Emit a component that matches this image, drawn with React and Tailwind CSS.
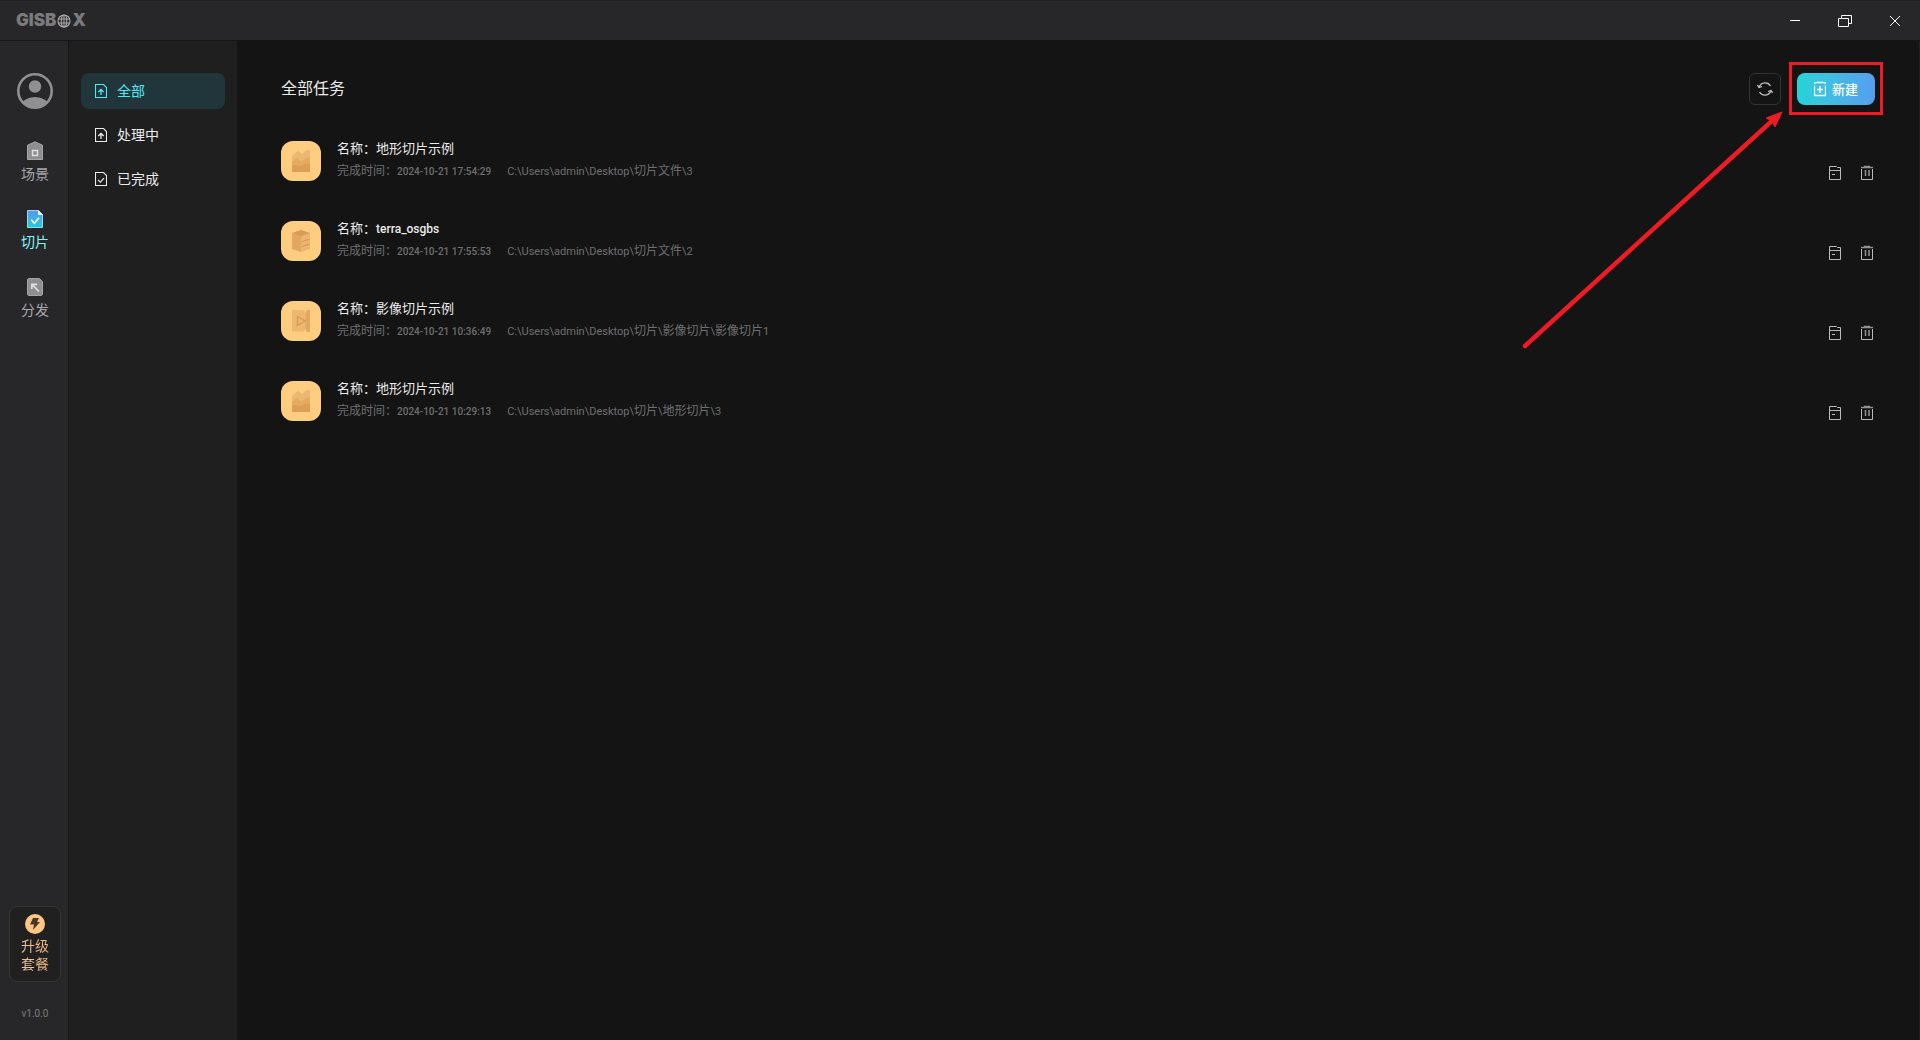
import React from "react";

const tasks = [
  { kind: "terrain", name: "地形切片示例", time: "2024-10-21 17:54:29", path: "C:\\Users\\admin\\Desktop\\切片文件\\3" },
  { kind: "model", name: "terra_osgbs", time: "2024-10-21 17:55:53", path: "C:\\Users\\admin\\Desktop\\切片文件\\2" },
  { kind: "image", name: "影像切片示例", time: "2024-10-21 10:36:49", path: "C:\\Users\\admin\\Desktop\\切片\\影像切片\\影像切片1" },
  { kind: "terrain", name: "地形切片示例", time: "2024-10-21 10:29:13", path: "C:\\Users\\admin\\Desktop\\切片\\地形切片\\3" },
];

// Sets the Latin runs of a mixed string in their own face and size.
function Mixed({ text, latin }) {
  return text.split(/([\x20-\x7e]+)/).map((part, i) =>
    i % 2 ? (
      <span key={i} className={latin}>
        {part}
      </span>
    ) : (
      part
    )
  );
}

function Logo() {
  return (
    <div aria-label="GISBOX" className="flex items-center gap-px font-['Inter',sans-serif] text-[17px] leading-none font-black text-[#7b7b7d]">
      <span>GISB</span>
      <svg className="size-[14px]" viewBox="0 0 14 14" fill="none" stroke="#a9a9ab" strokeWidth="1.1">
        <circle cx="7" cy="7" r="6" />
        <ellipse cx="7" cy="7" rx="2.8" ry="6" />
        <path d="M1 5h12M1 9h12M7 1v12" />
      </svg>
      <span>X</span>
    </div>
  );
}

function FileIcon({ check }) {
  return (
    <svg className="h-[14px] w-3" viewBox="0 0 12 14" fill="none" stroke="currentColor">
      <path d="M.5.5h8l3 3v10H.5z" strokeWidth="1.1" />
      {check ? <path d="M3 7.8l2.3 2.3L9 6.2" strokeWidth="1.2" /> : <path d="M6 11V6M3.3 8L6 5.500 8.700 8" strokeWidth="1.3" />}
    </svg>
  );
}

function RailIcon({ kind }) {
  return (
    <svg className="h-5 w-4" viewBox="0 0 16 20" fill="none">
      {kind === "scene" && (
        <>
          <path d="M.5 4.2L8 .8l7.500 3.400v14.300H.5z" fill="#8f8f91" stroke="#a5a5a7" />
          <path d="M5.5 9.5h5v5h-5z" fill="#8f8f91" stroke="#dededf" strokeWidth="1.4" />
        </>
      )}
      {kind === "slice" && (
        <>
          <defs>
            <linearGradient id="slice" x1="0" y1="0" x2="0" y2="1">
              <stop stopColor="#5a95ee" />
              <stop offset="1" stopColor="#20cfdc" />
            </linearGradient>
          </defs>
          <path d="M.5 1.5h11l4 4v13H.5z" fill="url(#slice)" stroke="#a5e3f4" strokeWidth=".9" />
          <path d="M11 1l5 5h-5z" fill="#e8fbff" />
          <path d="M4.2 10.8l3.1 3.4 4.8-5.4" stroke="#fff" strokeWidth="1.6" />
        </>
      )}
      {kind === "share" && (
        <>
          <path d="M1.5 1.5h11l3 3v13l-1 1h-13l-1-1v-15z" fill="#8f8f91" stroke="#a5a5a7" />
          <path d="M12 14.5L5.2 7.7M4.8 12V7.3h5.4" stroke="#dededf" strokeWidth="1.7" />
        </>
      )}
    </svg>
  );
}

function TaskIcon({ kind }) {
  return (
    <div className="flex size-10 shrink-0 items-center justify-center rounded-xl bg-[#ffcd80]">
      <svg className="h-[22px] w-[18px]" viewBox="0 0 18 22">
        {kind === "terrain" && (
          <>
            <path d="M0 6l6-5.5L10 4l5-4h3v21a1 1 0 0 1-1 1H1a1 1 0 0 1-1-1z" fill="#ecb76e" />
            <path d="M0 12l5-4 4 3.5L15 8h3v13a1 1 0 0 1-1 1H1a1 1 0 0 1-1-1z" fill="#e5aa60" />
            <path d="M0 17l3-2 5 1.5 6-3 4 .5v7a1 1 0 0 1-1 1H1a1 1 0 0 1-1-1z" fill="#dc9f53" />
          </>
        )}
        {kind === "model" && (
          <>
            <path d="M0 3l9 3v16l-9-3z" fill="#e2a860" />
            <path d="M18 3L9 6v16l9-3z" fill="#ebb56d" />
            <path d="M9 0l9 3-9 3.5L0 3z" fill="#d99c54" />
            <path d="M9.500 12l5-2.500M9.500 17l5-2.500M13.500 10.500L18 9M13.500 15.500L18 14" stroke="#d99c54" />
          </>
        )}
        {kind === "image" && (
          <>
            <path d="M0 0h12l1.5 3v16L12 21.500H0z" fill="#ecb76e" />
            <path d="M15 0h3v22h-3l-1.5-3V3z" fill="#e2a860" />
            <path d="M5.5 6.500v9l7.500-4.500z" fill="#ecb76e" stroke="#d99c54" strokeWidth="1.4" />
          </>
        )}
      </svg>
    </div>
  );
}

function TaskRow({ task }) {
  return (
    <li className="flex h-10 gap-4">
      <TaskIcon kind={task.kind} />
      <div className="min-w-0 flex-1 whitespace-nowrap">
        <p className="text-[13px] leading-[14px] text-[#ebebeb]">
          名称：
          <Mixed text={task.name} latin="font-['Roboto',sans-serif] text-xs leading-none font-medium" />
        </p>
        <p className="mt-[5px] flex gap-4 text-xs leading-5 text-[#6f6f71]">
          <span>
            完成时间：
            <span className="font-['Roboto',sans-serif] text-[10px] leading-none font-medium">{task.time}</span>
          </span>
          <span>
            <Mixed text={task.path} latin="font-['Roboto',sans-serif] text-[11px] leading-none" />
          </span>
        </p>
      </div>
      <div className="mr-0.5 flex gap-5 self-end text-[#b9b9bb]">
        <button type="button" aria-label="日志" className="h-4 w-3">
          <svg className="h-4 w-3" viewBox="0 0 12 16" fill="none" stroke="currentColor">
            <path d="M.5 1.5h7l1 1h3v12H.5zM.5 5.5h11M3 9.5h3" />
          </svg>
        </button>
        <button type="button" aria-label="删除" className="h-4 w-3">
          <svg className="h-4 w-3" viewBox="0 0 12 16" fill="none" stroke="currentColor">
            <path d="M.5 4v10.5h11V4" />
            <path d="M0 2.5h12M3 1.5h6M4.5 5v6M8 5v6" stroke="#919193" strokeWidth="1.5" />
          </svg>
        </button>
      </div>
    </li>
  );
}

const rail = [
  ["scene", "场景"],
  ["slice", "切片"],
  ["share", "分发"],
];

export default function App() {
  return (
    <div className="relative flex min-h-screen flex-col overflow-hidden bg-[#141414] font-['Noto_Sans_CJK_SC',sans-serif]">
      <header className="flex h-[41px] items-center justify-between border-t border-b border-t-[#202022] border-b-[#151515] bg-[#272729] pl-4 text-white">
        <Logo />
        <div className="flex h-full">
          <button type="button" aria-label="最小化" className="flex w-[50px] items-center justify-center">
            <svg className="size-4" viewBox="0 0 16 16" stroke="currentColor"><path d="M3 7.5h10" /></svg>
          </button>
          <button type="button" aria-label="还原" className="flex w-[50px] items-center justify-center">
            <svg className="size-4" viewBox="0 0 16 16" fill="none" stroke="currentColor">
              <path d="M1.5 5.5h10v8h-10zM4.5 5.5v-3h10v8h-3" />
            </svg>
          </button>
          <button type="button" aria-label="关闭" className="flex w-[50px] items-center justify-center">
            <svg className="size-4" viewBox="0 0 16 16" stroke="currentColor"><path d="M3 3l10 10M13 3L3 13" /></svg>
          </button>
        </div>
      </header>

      <div className="flex flex-1">
        <nav className="flex w-[69px] shrink-0 flex-col items-center border-r border-[#151515] bg-[#272729] pt-8 pb-[18px] pl-0.5">
          <button type="button" aria-label="用户" className="size-9">
            <svg className="size-9" viewBox="0 0 36 36">
              <defs><clipPath id="face"><circle cx="18" cy="18" r="17" /></clipPath></defs>
              <circle cx="18" cy="18" r="16.7" fill="none" stroke="#909092" strokeWidth="2.6" />
              <circle cx="18" cy="13.500" r="6.2" fill="#909092" />
              <ellipse cx="18" cy="33.500" rx="14" ry="9.500" fill="#909092" clipPath="url(#face)" />
            </svg>
          </button>
          <div className="mt-8 flex flex-col gap-6">
            {rail.map(([kind, label]) => (
              <button
                key={kind}
                type="button"
                className={kind === "slice" ? "flex h-11 flex-col items-center gap-0.5 text-sm text-[#7ff3fb]" : "flex h-11 flex-col items-center gap-0.5 text-sm text-[#a9a9ab]"}
              >
                <RailIcon kind={kind} />
                {label}
              </button>
            ))}
          </div>
          <button type="button" className="mt-auto flex h-[76px] w-[52px] flex-col items-center rounded-lg border border-[#3b342e] bg-[#202021] pt-[7px] text-sm leading-[18px]">
            <svg className="size-5 shrink-0" viewBox="0 0 20 20">
              <circle cx="10" cy="10" r="10" fill="#fdc685" />
              <path d="M8 4h6l-2 4h3l-7 8 1-5.500H5z" fill="#4a3520" />
            </svg>
            <span className="mt-0.5 bg-linear-to-r from-[#e9c49e] to-[#f3b679] bg-clip-text text-transparent">
              升级
              <br />
              套餐
            </span>
          </button>
          <span className="mt-6 font-['Roboto',sans-serif] text-[10px] leading-4 text-[#7b7b7d]">v1.0.0</span>
        </nav>

        <aside className="flex w-[168px] shrink-0 flex-col gap-2 bg-[#1f1f1f] px-3 pt-8 text-sm text-[#ebebeb]">
          <button type="button" className="flex h-9 items-center gap-[10px] rounded-lg bg-[#21363b] pl-[14px] text-[#4fe9f4]">
            <FileIcon />
            <span className="pb-0.5">全部</span>
          </button>
          <button type="button" className="flex h-9 items-center gap-[10px] rounded-lg pl-[14px]">
            <FileIcon />
            <span className="pb-0.5">处理中</span>
          </button>
          <button type="button" className="flex h-9 items-center gap-[10px] rounded-lg pl-[14px]">
            <FileIcon check />
            <span className="pb-0.5">已完成</span>
          </button>
        </aside>

        <main className="min-w-0 flex-1 border-r border-[#202020] pt-8 pr-11 pl-11">
          <div className="flex h-8 items-start">
            <h1 className="flex-1 text-base leading-7 text-[#ebebeb]">全部任务</h1>
            <button type="button" aria-label="刷新" className="flex size-8 items-center justify-center rounded-md border border-[#333335] text-[#c4c4c6]">
              <svg className="size-4" viewBox="0 0 16 16" fill="none" stroke="currentColor" strokeWidth="1.3">
                <path d="M2.2 6A6.300 6.300 0 0 1 13.500 5M13.800 10A6.300 6.300 0 0 1 2.500 11" />
                <path d="M.5 4l1.500 2.500 3-1M15.500 12L14 9.500l-3 1" />
              </svg>
            </button>
            <div className="relative ml-4">
              <button type="button" className="flex h-8 w-[78px] items-center justify-center gap-1.5 rounded-lg bg-linear-to-r from-[#24d3d8] to-[#559df0] text-[13px] font-medium text-white">
                <svg className="h-4 w-3" viewBox="0 0 12 16" fill="none" stroke="currentColor">
                  <path d="M.5 4.5v10h11v-10M0 2.500l3-1h6l3 1M6 5v7M3 8.500h6" strokeWidth="1.3" />
                </svg>
                <span className="pb-px">新建</span>
              </button>
              <div className="pointer-events-none absolute -top-[11px] -right-2 -bottom-[10px] -left-2 border-3 border-[#ed1c24]" />
            </div>
          </div>
          <ul className="mt-9 flex flex-col gap-10">
            {tasks.map((task, i) => (
              <TaskRow key={i} task={task} />
            ))}
          </ul>
        </main>
      </div>

      <svg className="pointer-events-none absolute top-[108px] right-[130px] h-[244px] w-[270px]" viewBox="0 0 270 244">
        <path d="M5 238L254 11" stroke="#ed1c24" strokeWidth="4.5" strokeLinecap="round" />
        <path d="M262 4l-7 15-3-6-6-3z" fill="#ed1c24" stroke="#ed1c24" />
      </svg>
    </div>
  );
}
